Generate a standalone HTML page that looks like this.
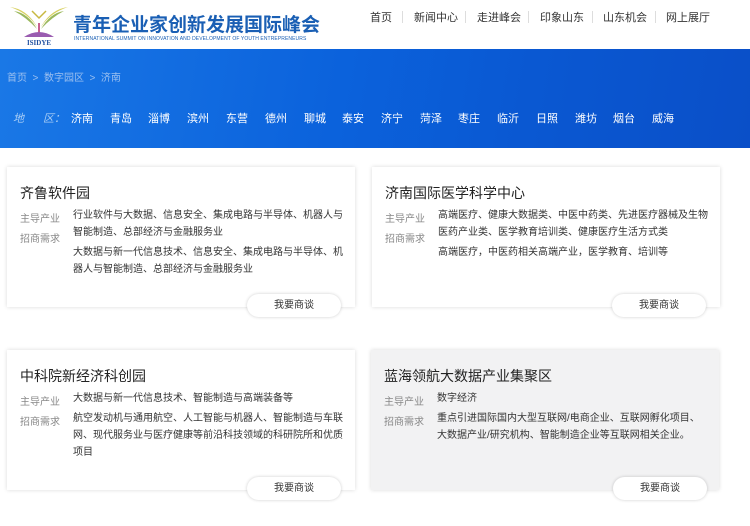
<!DOCTYPE html>
<html><head><meta charset="utf-8"><style>
*{margin:0;padding:0;box-sizing:border-box}
body{width:750px;height:526px;overflow:hidden;background:#fff;font-family:"Liberation Sans","Noto Sans CJK SC",sans-serif;position:relative}
.hdr{position:absolute;left:0;top:0;width:750px;height:48px;background:#fff}
.ttl{position:absolute;left:73px;top:10px;font-size:19px;font-weight:bold;color:#1a5fb4;white-space:nowrap}
.sub{position:absolute;left:74px;top:36px;font-size:5px;color:#1a5fb4;white-space:nowrap;letter-spacing:0.1px}
.nav{position:absolute;top:9px;font-size:11px;color:#333;white-space:nowrap}
.sep{position:absolute;top:11px;width:1px;height:12px;background:#ddd}
.ban{position:absolute;left:0;top:49px;width:750px;height:99px;background:linear-gradient(100deg,#1a78e6 0%,#0b62dc 45%,#0a58d2 70%,#0a4fc8 100%)}
.crumb{position:absolute;left:7px;top:69px;font-size:10px;color:#9cc0f0;white-space:nowrap}
.reg{position:absolute;top:110px;font-size:11px;color:#fff;white-space:nowrap}
.card{position:absolute;width:348px;height:140px;background:#fff;box-shadow:0 0 4px rgba(0,0,0,.15)}
.card h3{position:absolute;left:13px;top:16px;font-size:14px;font-weight:normal;color:#222;white-space:nowrap}
.lb{position:absolute;left:13px;font-size:10px;color:#888}
.tx{position:absolute;left:66px;width:272px;font-size:10px;line-height:17px;color:#333}
.btn{position:absolute;width:94px;height:23px;border-radius:12px;background:#fff;box-shadow:0 0 3px rgba(0,0,0,.2);font-size:10px;color:#333;text-align:center;line-height:23px}
</style></head><body>
<div class="hdr">
<svg style="position:absolute;left:8px;top:3px" width="62" height="44" viewBox="0 0 62 44">
<path d="M2 4 Q18 6 28 22 L29 24 Q20 10 2 4Z" fill="#d8d060"/>
<path d="M60 4 Q44 6 34 22 L33 24 Q42 10 60 4Z" fill="#d8d060"/>
<path d="M6 8 Q20 10 29 26 Q18 14 6 8Z" fill="#9ab85c"/>
<path d="M56 8 Q42 10 33 26 Q44 14 56 8Z" fill="#9ab85c"/>
<path d="M24 8 L31 15 L38 8" fill="none" stroke="#c8b840" stroke-width="1.5"/>
<path d="M30 20 L30 30 L32 30 L32 20Z" fill="#c86090"/>
<path d="M16 34 Q31 24 46 34Z" fill="#9a5cb0"/>
<text x="31" y="42" font-size="7" font-family="Liberation Serif" font-weight="bold" fill="#2050a0" text-anchor="middle">ISIDYE</text>
</svg>
<div class="ttl">青年企业家创新发展国际峰会</div>
<div class="sub">INTERNATIONAL SUMMIT ON INNOVATION AND DEVELOPMENT OF YOUTH ENTREPRENEURS</div>
<div class="nav" style="left:370px">首页</div><div class="sep" style="left:402px"></div>
<div class="nav" style="left:414px">新闻中心</div><div class="sep" style="left:465px"></div>
<div class="nav" style="left:477px">走进峰会</div><div class="sep" style="left:528px"></div>
<div class="nav" style="left:540px">印象山东</div><div class="sep" style="left:592px"></div>
<div class="nav" style="left:603px">山东机会</div><div class="sep" style="left:655px"></div>
<div class="nav" style="left:666px">网上展厅</div>
</div>
<div class="ban"></div>
<div class="crumb">首页 &nbsp;&gt;&nbsp; 数字园区 &nbsp;&gt;&nbsp; 济南</div>
<div class="reg" style="left:13px;color:#a8cdf5;font-style:italic">地</div>
<div class="reg" style="left:43px;color:#a8cdf5;font-style:italic">区：</div>
<div class="reg" style="left:71px">济南</div>
<div class="reg" style="left:110px">青岛</div>
<div class="reg" style="left:148px">淄博</div>
<div class="reg" style="left:187px">滨州</div>
<div class="reg" style="left:226px">东营</div>
<div class="reg" style="left:265px">德州</div>
<div class="reg" style="left:304px">聊城</div>
<div class="reg" style="left:342px">泰安</div>
<div class="reg" style="left:381px">济宁</div>
<div class="reg" style="left:420px">菏泽</div>
<div class="reg" style="left:458px">枣庄</div>
<div class="reg" style="left:497px">临沂</div>
<div class="reg" style="left:536px">日照</div>
<div class="reg" style="left:575px">潍坊</div>
<div class="reg" style="left:613px">烟台</div>
<div class="reg" style="left:652px">威海</div>

<div class="card" style="left:7px;top:167px">
<h3>齐鲁软件园</h3>
<div class="lb" style="top:43px">主导产业</div><div class="lb" style="top:63px">招商需求</div>
<div class="tx" style="top:40px">行业软件与大数据、信息安全、集成电路与半导体、机器人与智能制造、总部经济与金融服务业</div>
<div class="tx" style="top:77px">大数据与新一代信息技术、信息安全、集成电路与半导体、机器人与智能制造、总部经济与金融服务业</div>
</div>
<div class="btn" style="left:247px;top:294px">我要商谈</div>

<div class="card" style="left:372px;top:167px">
<h3>济南国际医学科学中心</h3>
<div class="lb" style="top:43px">主导产业</div><div class="lb" style="top:63px">招商需求</div>
<div class="tx" style="top:40px">高端医疗、健康大数据类、中医中药类、先进医疗器械及生物医药产业类、医学教育培训类、健康医疗生活方式类</div>
<div class="tx" style="top:77px">高端医疗，中医药相关高端产业，医学教育、培训等</div>
</div>
<div class="btn" style="left:612px;top:294px">我要商谈</div>

<div class="card" style="left:7px;top:350px">
<h3>中科院新经济科创园</h3>
<div class="lb" style="top:43px">主导产业</div><div class="lb" style="top:63px">招商需求</div>
<div class="tx" style="top:40px">大数据与新一代信息技术、智能制造与高端装备等</div>
<div class="tx" style="top:60px">航空发动机与通用航空、人工智能与机器人、智能制造与车联网、现代服务业与医疗健康等前沿科技领域的科研院所和优质项目</div>
</div>
<div class="btn" style="left:247px;top:477px">我要商谈</div>

<div class="card" style="left:371px;top:350px;background:#f2f2f3">
<h3>蓝海领航大数据产业集聚区</h3>
<div class="lb" style="top:43px">主导产业</div><div class="lb" style="top:63px">招商需求</div>
<div class="tx" style="top:40px">数字经济</div>
<div class="tx" style="top:60px">重点引进国际国内大型互联网/电商企业、互联网孵化项目、大数据产业/研究机构、智能制造企业等互联网相关企业。</div>
</div>
<div class="btn" style="left:613px;top:477px">我要商谈</div>
</body></html>
